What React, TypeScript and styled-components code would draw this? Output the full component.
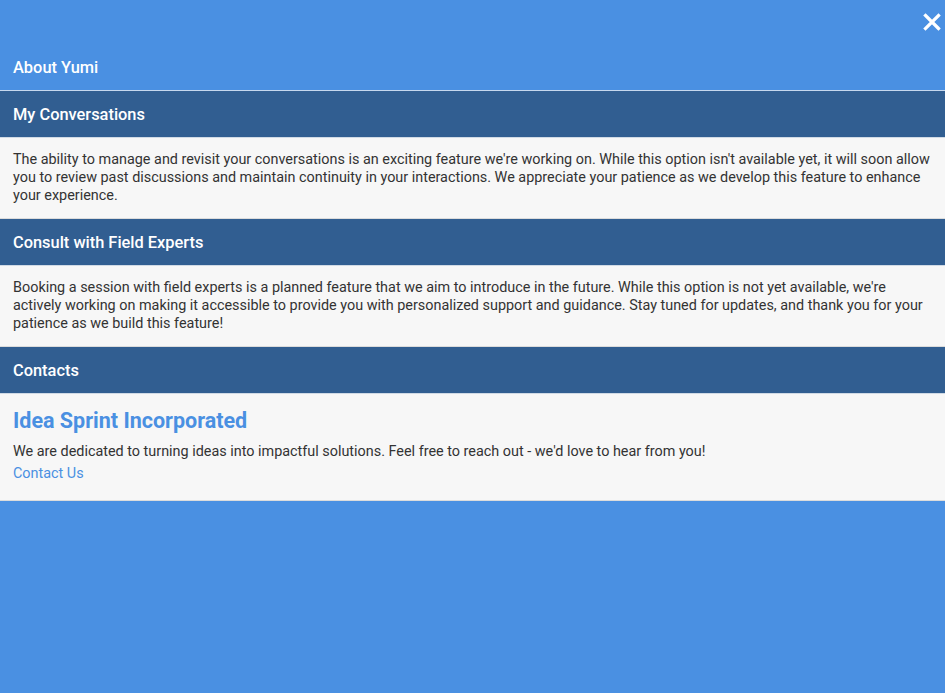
import React from 'react'
import styled, { createGlobalStyle } from 'styled-components'

const GlobalStyle = createGlobalStyle`
  html, body {
    margin: 0;
    padding: 0;
    background: #4a90e2;
    font-family: Roboto, 'Liberation Sans', Arial, sans-serif;
  }
`

const Panel = styled.div`
  width: 945px;
  min-height: 693px;
  background: #4a90e2;
  display: flex;
  flex-direction: column;
`

const TopBar = styled.div`
  height: 44px;
  display: flex;
  justify-content: flex-end;
  align-items: flex-start;
`

const CloseButton = styled.button`
  background: none;
  border: none;
  padding: 0;
  margin: 13px 4px 0 0;
  width: 18px;
  height: 18px;
  cursor: pointer;
  display: flex;
`

const SectionHeader = styled.div<{ $dark?: boolean }>`
  height: 47px;
  box-sizing: border-box;
  display: flex;
  align-items: center;
  padding: 0 13px;
  color: #ffffff;
  font-size: 16.4px;
  font-weight: 500;
  background: ${p => (p.$dark ? '#315e91' : '#4a90e2')};
  border-bottom: 1px solid ${p => (p.$dark ? '#d0dae5' : '#c6d8ee')};
`

const SectionBody = styled.div`
  background: #f7f7f7;
  padding: 13px;
  color: #333333;
  font-size: 14.4px;
  line-height: 18px;
  border-bottom: 1px solid #dcdcdc;
`

const ContactBody = styled(SectionBody)`
  padding: 14px 13px 17px;
`

const Company = styled.h2`
  margin: 0 0 9px;
  color: #4a90e2;
  font-size: 21.5px;
  line-height: 26px;
  font-weight: 700;
`

const Paragraph = styled.p`
  margin: 0;
`

const ContactLink = styled.a`
  display: block;
  margin-top: 4px;
  color: #4a90e2;
  text-decoration: none;
`

const CloseIcon = () => (
  <svg width="18" height="18" viewBox="0 0 18 18">
    <path d="M2.5 2.5 L15.5 15.5 M15.5 2.5 L2.5 15.5" stroke="#ffffff" strokeWidth="3.2" strokeLinecap="square" />
  </svg>
)

export default function App() {
  return (
    <>
      <GlobalStyle />
      <Panel>
        <TopBar>
          <CloseButton aria-label="Close">
            <CloseIcon />
          </CloseButton>
        </TopBar>
        <SectionHeader>About Yumi</SectionHeader>
        <SectionHeader $dark>My Conversations</SectionHeader>
        <SectionBody>
          The ability to manage and revisit your conversations is an exciting feature we're working on. While this
          option isn't available yet, it will soon allow you to review past discussions and maintain continuity in your
          interactions. We appreciate your patience as we develop this feature to enhance your experience.
        </SectionBody>
        <SectionHeader $dark>Consult with Field Experts</SectionHeader>
        <SectionBody>
          Booking a session with field experts is a planned feature that we aim to introduce in the future. While this
          option is not yet available, we're actively working on making it accessible to provide you with personalized
          support and guidance. Stay tuned for updates, and thank you for your patience as we build this feature!
        </SectionBody>
        <SectionHeader $dark>Contacts</SectionHeader>
        <ContactBody>
          <Company>Idea Sprint Incorporated</Company>
          <Paragraph>
            We are dedicated to turning ideas into impactful solutions. Feel free to reach out - we'd love to hear from
            you!
          </Paragraph>
          <ContactLink href="#">Contact Us</ContactLink>
        </ContactBody>
      </Panel>
    </>
  )
}
